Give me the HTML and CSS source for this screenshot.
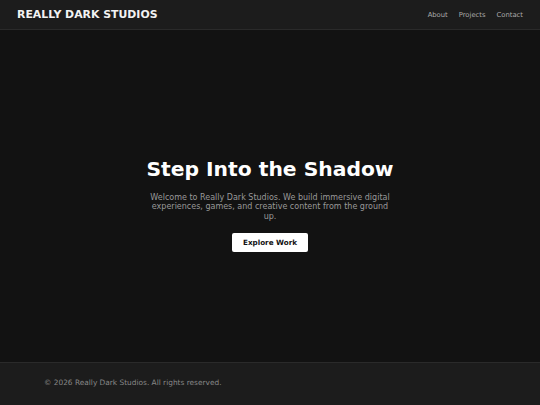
FILE: index.html
```html
<!DOCTYPE html>
<html lang="en">
<head>
  <meta charset="UTF-8" />
  <title>Really Dark Studios</title>
  <link rel="stylesheet" href="styles.css">
</head>
<body>
  <header class="site-header">
    <div class="logo">REALLY DARK STUDIOS</div>
    <nav class="nav">
      <a href="#about">About</a>
      <a href="#projects">Projects</a>
      <a href="#contact">Contact</a>
    </nav>
  </header>

  <main class="hero">
    <h1>Step Into the Shadow</h1>
    <p>Welcome to Really Dark Studios. We build immersive digital experiences, games, and creative content from the ground up.</p>
    <a class="btn" href="#projects">Explore Work</a>
  </main>

  <footer class="site-footer">
    <p>&copy; 2026 Really Dark Studios. All rights reserved.</p>
  </footer>
</body>
</html>
```

FILE: styles.css
```css
html, body {
  height: 100%;
}
body {
  font-family: "DejaVu Sans", Verdana, sans-serif;
  background-color: #121212;
  color: #fff;
  margin: 0;
  display: flex;
  flex-direction: column;
}
.site-header {
  display: flex;
  justify-content: space-between;
  align-items: center;
  height: 29px;
  padding: 0 17px;
  background-color: #1c1c1c;
  border-bottom: 1px solid #2a2a2a;
}
.logo {
  font-weight: bold;
  font-size: 10.9px;
  color: #f2f2f2;
}
.nav {
  display: flex;
  gap: 11px;
}
.nav a {
  color: #aaa;
  text-decoration: none;
  font-size: 6.8px;
}
.hero {
  flex: 1;
  display: flex;
  flex-direction: column;
  align-items: center;
  justify-content: center;
  text-align: center;
  padding-top: 17px;
}
.hero h1 {
  font-size: 20.3px;
  margin: 0 0 12px;
}
.hero p {
  max-width: 250px;
  font-size: 8px;
  line-height: 1.2;
  color: #999;
  margin: 0 0 12px;
}
.btn {
  background-color: #fff;
  color: #111;
  font-weight: bold;
  font-size: 7.2px;
  text-decoration: none;
  padding: 5px 11px;
  border-radius: 2px;
}
.site-footer {
  height: 27px;
  padding: 15px 44px 0;
  background-color: #1c1c1c;
  border-top: 1px solid #2a2a2a;
}
.site-footer p {
  margin: 0;
  font-size: 7.4px;
  color: #888;
}
```
